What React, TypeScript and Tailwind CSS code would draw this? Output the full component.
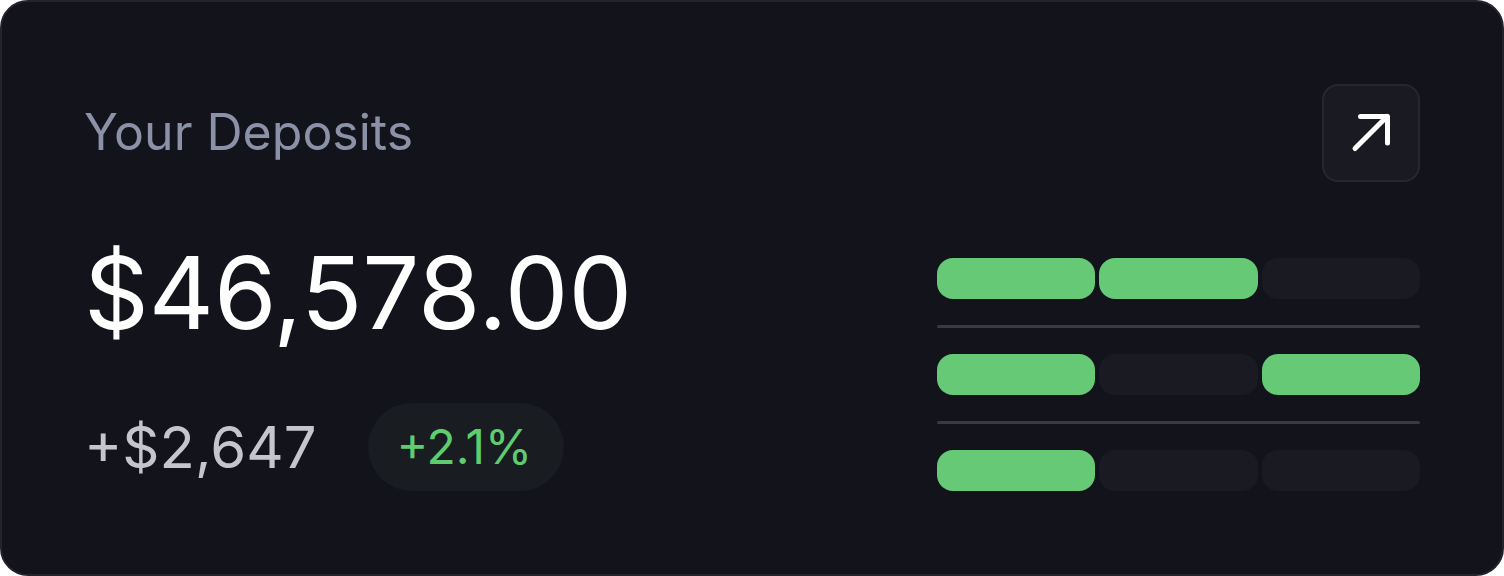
import React from "react";

export default function App() {
  // each row: which of the three segments are filled
  const rows = [
    [true, true, false],
    [true, false, true],
    [true, false, false],
  ];

  return (
    <div className="w-full h-[576px] bg-white">
      <div
        className="w-full h-full rounded-[28px] border-2 border-[#23242d] bg-[#12131b] px-[82px] pt-[82px] pb-[83px] flex justify-between"
        style={{ fontFamily: "Inter, 'Noto Sans', sans-serif" }}
      >
        {/* ===== left side ===== */}
        <div className="flex flex-col">
          <div className="h-[98px] flex items-center">
            <h2 className="text-[50px] leading-none text-[#8b91a7] font-normal">
              Your Deposits
            </h2>
          </div>
          <div className="mt-[62px] text-[101px] leading-none text-white font-normal">
            $46,578.00
          </div>
          <div className="mt-[60px] flex items-center gap-[52px]">
            <span className="text-[58px] leading-none text-[#c4c5ce]">
              +$2,647
            </span>
            <span className="h-[88px] pl-[28px] pr-[32px] rounded-full bg-[#191d21] flex items-center text-[48px] leading-none text-[#5fcd6f]">
              +2.1%
            </span>
          </div>
        </div>

        {/* ===== right side ===== */}
        <div className="flex flex-col items-end justify-between">
          <button className="w-[98px] h-[98px] rounded-[16px] border-2 border-[#262730] bg-[#1a1b22] flex items-center justify-center">
            <svg width="44" height="44" viewBox="0 0 44 44" fill="none" stroke="white" strokeWidth="5" strokeLinecap="round" strokeLinejoin="round">
              <path d="M11.5 5.5H38.5V32" />
              <path d="M6 37.5L38 5.5" />
            </svg>
          </button>

          <div className="w-[483px] flex flex-col gap-[26px]">
            {rows.map((row, i) => (
              <React.Fragment key={i}>
                {i > 0 && <div className="h-[3px] rounded-full bg-[#393a44]" />}
                <div className="grid grid-cols-3 gap-[4px]">
                  {row.map((on, j) => (
                    <div
                      key={j}
                      className={on ? "h-[41px] rounded-[16px] bg-[#66c975]" : "h-[41px] rounded-[16px] bg-[#1a1b22]"}
                    />
                  ))}
                </div>
              </React.Fragment>
            ))}
          </div>
        </div>
      </div>
    </div>
  );
}
